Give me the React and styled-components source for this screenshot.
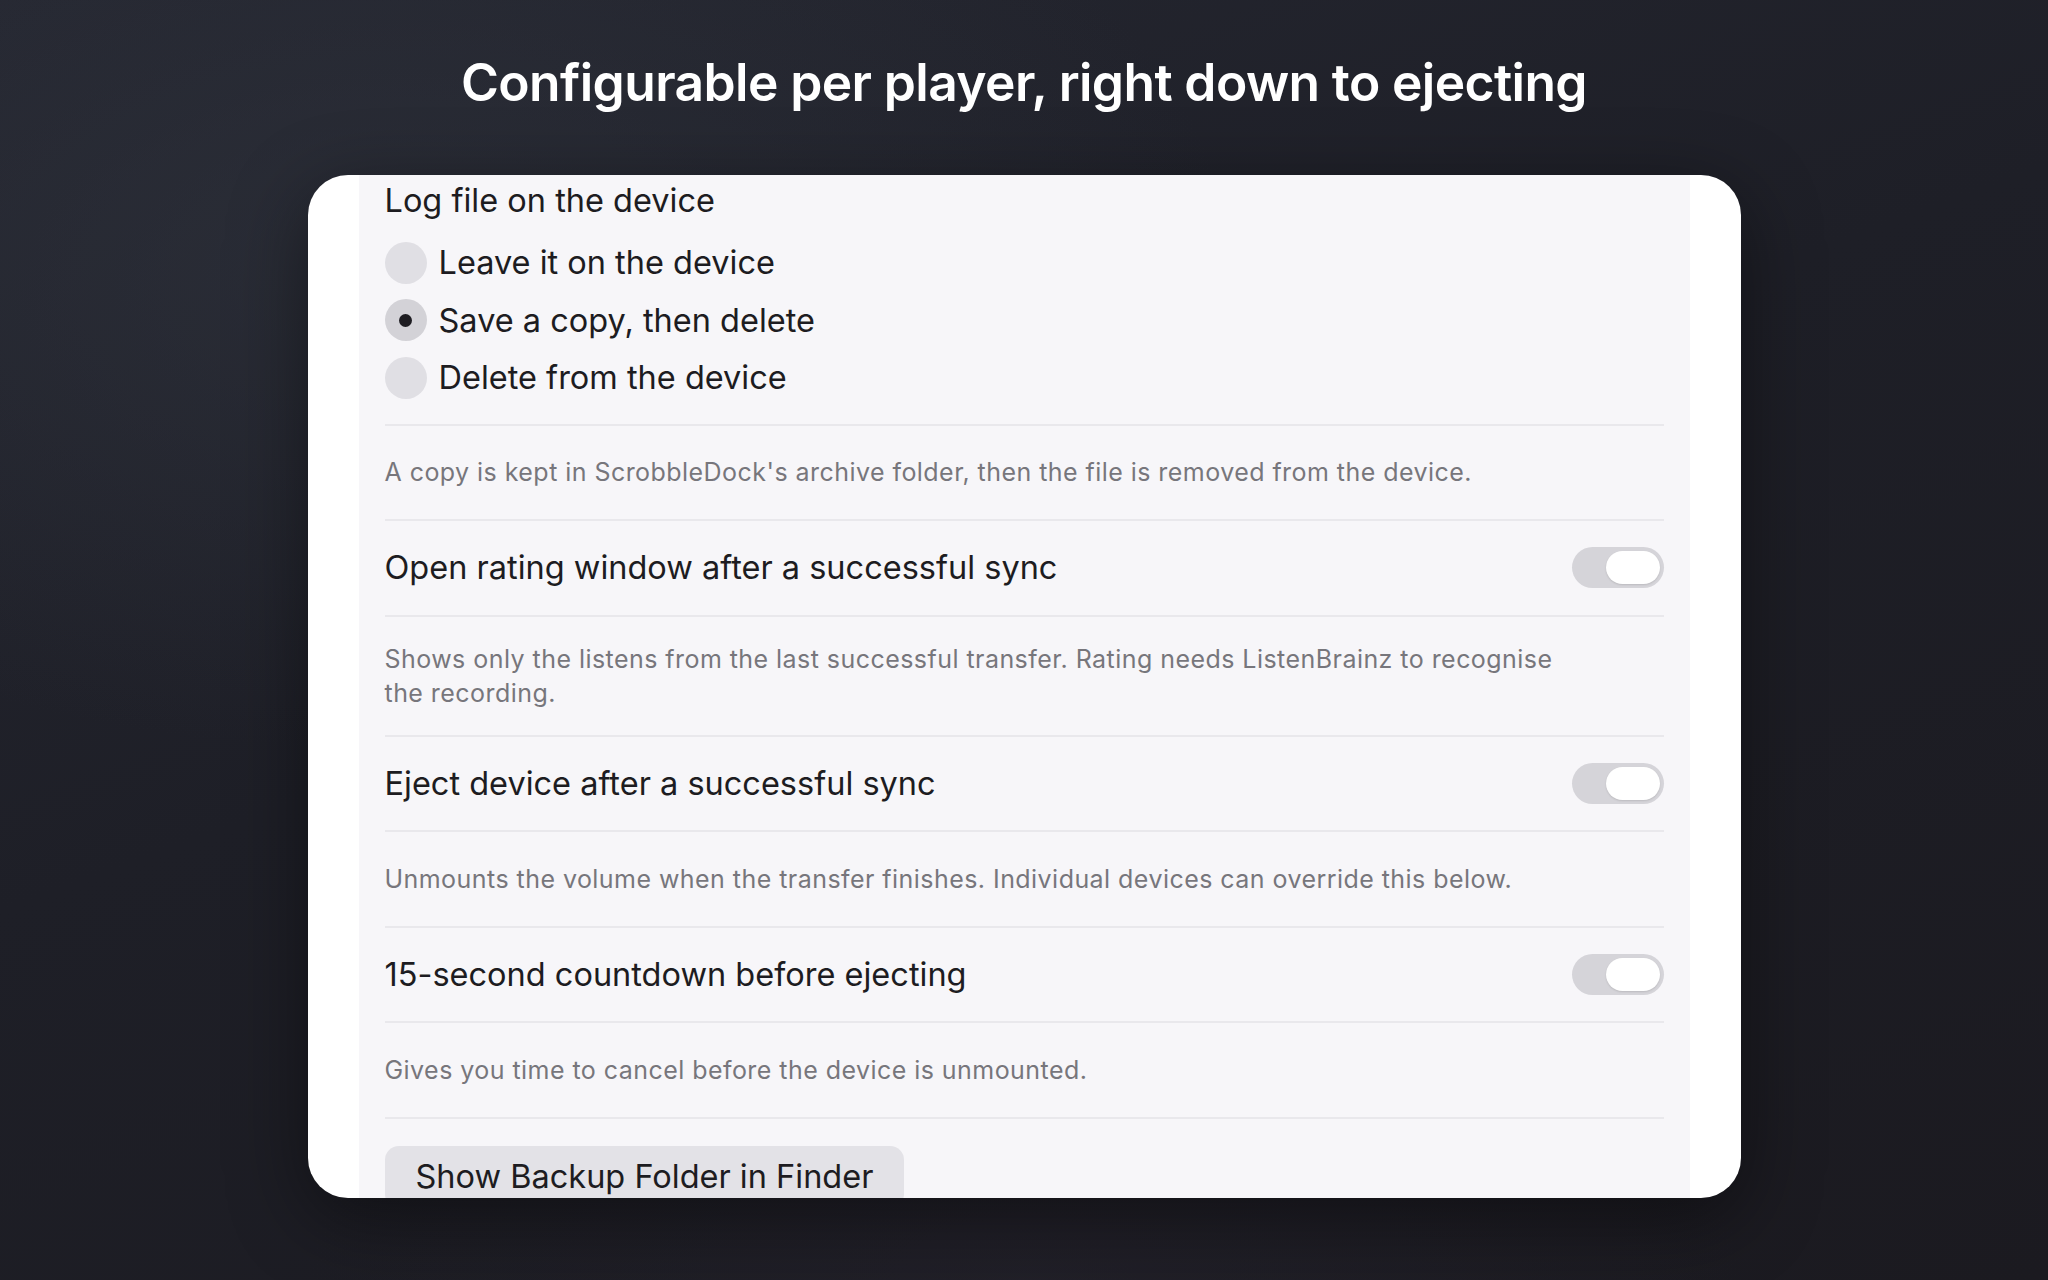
import React from "react";
import styled, { createGlobalStyle } from "styled-components";

const GlobalStyle = createGlobalStyle`
  html, body {
    margin: 0;
    padding: 0;
  }
  body {
    font-family: Inter, "Noto Sans", "Liberation Sans", sans-serif;
    background: #1d1d24;
    -webkit-font-smoothing: antialiased;
  }
`;

const Page = styled.div`
  width: 2048px;
  height: 1280px;
  overflow: hidden;
  box-sizing: border-box;
  display: flex;
  flex-direction: column;
  align-items: center;
  background:
    radial-gradient(ellipse 60% 55% at 18% 20%, rgba(48, 52, 62, 0.55), transparent 70%),
    radial-gradient(ellipse 50% 40% at 50% 100%, rgba(36, 34, 44, 0.6), transparent 70%),
    linear-gradient(160deg, #252731 0%, #1e1f27 45%, #1b1a20 100%);
`;

const Title = styled.h1`
  margin: 51px 0 0;
  height: 62px;
  line-height: 62px;
  font-size: 51.5px;
  font-weight: 600;
  letter-spacing: -0.6px;
  color: #ffffff;
`;

const Card = styled.div`
  margin-top: 62px;
  width: 1433px;
  height: 1023px;
  background: #ffffff;
  border-radius: 40px;
  overflow: hidden;
  display: flex;
  justify-content: center;
  box-shadow: 0 20px 80px rgba(0, 0, 0, 0.45);
`;

const Panel = styled.div`
  width: 1331px;
  box-sizing: border-box;
  padding: 6px 26px 0;
  background: #f7f6f9;
  color: #1d1c21;
`;

const Heading = styled.div`
  font-size: 32.5px;
  line-height: 40px;
`;

const RadioGroup = styled.div`
  display: flex;
  flex-direction: column;
  padding: 13px 0 17px;
  border-bottom: 2px solid #e9e8ec;
`;

const RadioRow = styled.label`
  display: flex;
  align-items: center;
  gap: 12px;
  height: 57.5px;
  font-size: 32.5px;
`;

const RadioDot = styled.span`
  width: 42px;
  height: 42px;
  border-radius: 50%;
  background: ${(p) => (p.$checked ? "#d3d2d7" : "#e0dfe4")};
  display: flex;
  align-items: center;
  justify-content: center;
  flex-shrink: 0;

  &::after {
    content: "";
    width: 13px;
    height: 13px;
    border-radius: 50%;
    background: #1e1d22;
    display: ${(p) => (p.$checked ? "block" : "none")};
  }
`;

const Desc = styled.div`
  min-height: 95.5px;
  box-sizing: border-box;
  padding: 25px 0;
  display: flex;
  align-items: center;
  border-bottom: 2px solid #e9e8ec;
  font-size: 25px;
  line-height: 34px;
  letter-spacing: 0.45px;
  color: #77767c;
`;

const ToggleRow = styled.div`
  height: 95.5px;
  box-sizing: border-box;
  display: flex;
  align-items: center;
  justify-content: space-between;
  border-bottom: 2px solid #e9e8ec;
  font-size: 32.5px;
`;

const Toggle = styled.span`
  width: 92px;
  height: 41px;
  border-radius: 21px;
  background: #d5d4d9;
  box-sizing: border-box;
  padding: 4px;
  display: flex;
  justify-content: flex-end;

  &::after {
    content: "";
    width: 54px;
    height: 33px;
    border-radius: 17px;
    background: #ffffff;
    box-shadow: 0 1px 2px rgba(0, 0, 0, 0.12);
  }
`;

const Button = styled.button`
  margin-top: 27px;
  height: 62px;
  padding: 0 31px;
  border: none;
  border-radius: 14px;
  background: #e3e2e7;
  font-family: inherit;
  font-size: 32.5px;
  color: #1d1c21;
`;

const options = [
  { label: "Leave it on the device", checked: false },
  { label: "Save a copy, then delete", checked: true },
  { label: "Delete from the device", checked: false },
];

const settings = [
  {
    label: "Open rating window after a successful sync",
    desc: (
      <>
        Shows only the listens from the last successful transfer. Rating needs ListenBrainz to recognise
        <br />
        the recording.
      </>
    ),
  },
  {
    label: "Eject device after a successful sync",
    desc: "Unmounts the volume when the transfer finishes. Individual devices can override this below.",
  },
  {
    label: "15-second countdown before ejecting",
    desc: "Gives you time to cancel before the device is unmounted.",
  },
];

export default function App() {
  return (
    <>
      <GlobalStyle />
      <Page>
        <Title>Configurable per player, right down to ejecting</Title>
        <Card>
          <Panel>
            <Heading>Log file on the device</Heading>
            <RadioGroup>
              {options.map((o) => (
                <RadioRow key={o.label}>
                  <RadioDot $checked={o.checked} />
                  {o.label}
                </RadioRow>
              ))}
            </RadioGroup>
            <Desc>A copy is kept in ScrobbleDock's archive folder, then the file is removed from the device.</Desc>
            {settings.map((s) => (
              <React.Fragment key={s.label}>
                <ToggleRow>
                  {s.label}
                  <Toggle />
                </ToggleRow>
                <Desc>{s.desc}</Desc>
              </React.Fragment>
            ))}
            <Button>Show Backup Folder in Finder</Button>
          </Panel>
        </Card>
      </Page>
    </>
  );
}
